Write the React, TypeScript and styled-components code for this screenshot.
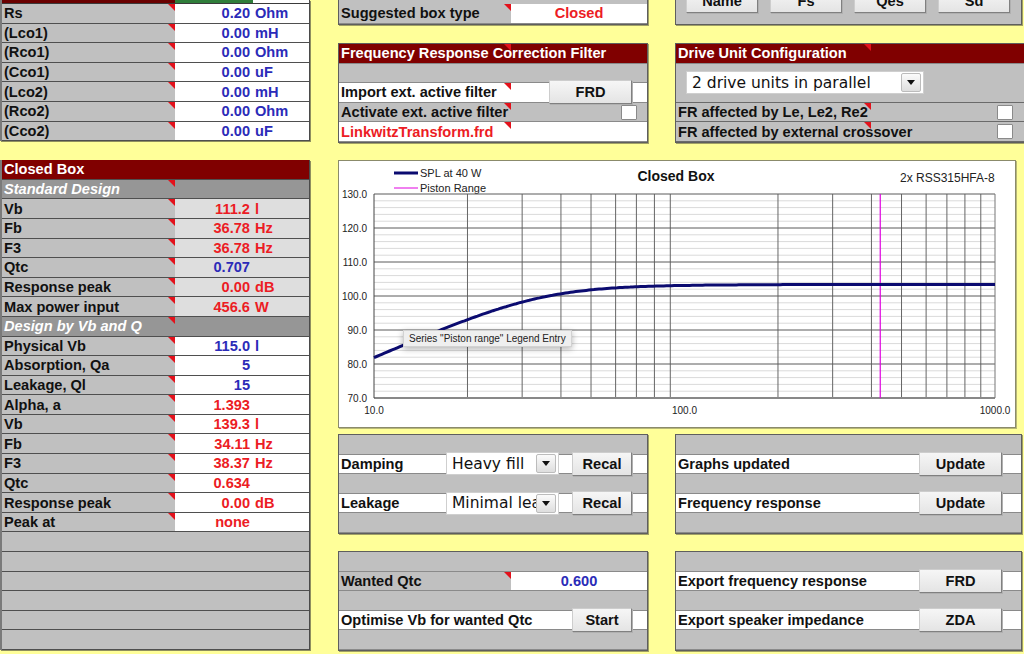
import styled, { createGlobalStyle, css } from 'styled-components';

const GlobalStyle = createGlobalStyle`
  html, body { margin: 0; padding: 0; }
  body {
    background: #ffff99;
    font-family: 'Liberation Sans', Arial, Helvetica, sans-serif;
    overflow: hidden;
  }
`;

const ROW = 19.6;
const TEXT = '14.6px';

const INK = { blue: '#2b2bb8', red: '#ec1c24', black: '#111111', white: '#ffffff' };
type Ink = keyof typeof INK;

const TONE = {
  grey: '#c0c0c0',
  white: '#ffffff',
  light: '#dedede',
  dark: '#800000',
  sub: '#969696',
};
type Tone = keyof typeof TONE;

type Item = { label: string; num?: string; unit?: string; ink?: Ink };

const crossover: Item[] = [
  { label: 'Rs', num: '0.20', unit: 'Ohm' },
  { label: '(Lco1)', num: '0.00', unit: 'mH' },
  { label: '(Rco1)', num: '0.00', unit: 'Ohm' },
  { label: '(Cco1)', num: '0.00', unit: 'uF' },
  { label: '(Lco2)', num: '0.00', unit: 'mH' },
  { label: '(Rco2)', num: '0.00', unit: 'Ohm' },
  { label: '(Cco2)', num: '0.00', unit: 'uF' },
];

const standard: Item[] = [
  { label: 'Vb', num: '111.2', unit: 'l', ink: 'red' },
  { label: 'Fb', num: '36.78', unit: 'Hz', ink: 'red' },
  { label: 'F3', num: '36.78', unit: 'Hz', ink: 'red' },
  { label: 'Qtc', num: '0.707', ink: 'blue' },
  { label: 'Response peak', num: '0.00', unit: 'dB', ink: 'red' },
  { label: 'Max power input', num: '456.6', unit: 'W', ink: 'red' },
];

const byVbQ: Item[] = [
  { label: 'Physical Vb', num: '115.0', unit: 'l', ink: 'blue' },
  { label: 'Absorption, Qa', num: '5', ink: 'blue' },
  { label: 'Leakage, Ql', num: '15', ink: 'blue' },
  { label: 'Alpha, a', num: '1.393', ink: 'red' },
  { label: 'Vb', num: '139.3', unit: 'l', ink: 'red' },
  { label: 'Fb', num: '34.11', unit: 'Hz', ink: 'red' },
  { label: 'F3', num: '38.37', unit: 'Hz', ink: 'red' },
  { label: 'Qtc', num: '0.634', ink: 'red' },
  { label: 'Response peak', num: '0.00', unit: 'dB', ink: 'red' },
  { label: 'Peak at', num: 'none', ink: 'red' },
];

/* ---------- layout ---------- */

const Page = styled.div`
  display: flex;
  gap: 28px;
  width: 1024px;
  height: 654px;
  overflow: hidden;
`;

const LeftColumn = styled.div`
  width: 310px;
  flex: none;
  display: flex;
  flex-direction: column;
  gap: 19px;
`;

const Sheet = styled.div`
  display: flex;
  flex-direction: column;
  box-sizing: border-box;
  background: #c0c0c0;
  border-left: 2px solid #7a7a7a;
  border-right: 1px solid #4a4a4a;
  box-shadow: 1px 1px 0 #8f8f5f;
`;

const Strip = styled.div`
  display: flex;
  height: 4px;
  border-bottom: 1px solid #3a3a3a;
  box-sizing: border-box;
`;

const StripLabel = styled.div`
  width: 173px;
  background: #6a0000;
`;

const StripValue = styled.div`
  flex: 1;
  background: linear-gradient(to right, #2f7d3a 0 78px, #ffffff 78px);
`;

const Main = styled.div`
  width: 686px;
  flex: none;
  display: flex;
  flex-direction: column;
`;

const Band = styled.div<{ $top: number }>`
  display: flex;
  align-items: flex-start;
  gap: 27px;
  flex: none;
  margin-top: ${(p) => p.$top}px;
`;

const Panel = styled.div<{ $w: number; $pad?: number }>`
  width: ${(p) => p.$w}px;
  flex: none;
  box-sizing: border-box;
  display: flex;
  flex-direction: column;
  padding-top: ${(p) => p.$pad ?? 0}px;
  background: #c0c0c0;
  border: 1px solid #5e5e5e;
  box-shadow: 1px 1px 0 #a0a066;
`;

const ButtonBar = styled.div`
  display: flex;
  gap: 12px;
  padding: 8px 0 11px 10px;
`;

const Row = styled.div<{ $tone?: Tone; $rule?: string; $span?: number }>`
  display: flex;
  align-items: stretch;
  flex: none;
  height: ${(p) => ROW * (p.$span ?? 1)}px;
  box-sizing: border-box;
  background: ${(p) => TONE[p.$tone ?? 'grey']};
  border-bottom: 1px solid ${(p) => p.$rule ?? '#4f4f4f'};
`;

const Label = styled.div<{ $w?: number; $tone?: Tone; $ink?: Ink; $mark?: boolean; $italic?: boolean }>`
  position: relative;
  display: flex;
  align-items: center;
  box-sizing: border-box;
  ${(p) => (p.$w ? css`width: ${p.$w}px; flex: none;` : css`flex: 1;`)}
  padding-left: 2px;
  background: ${(p) => (p.$tone ? TONE[p.$tone] : 'transparent')};
  color: ${(p) => INK[p.$ink ?? 'black']};
  font-size: ${TEXT};
  font-weight: bold;
  font-style: ${(p) => (p.$italic ? 'italic' : 'normal')};
  white-space: nowrap;
  ${(p) =>
    p.$mark &&
    css`
      &::after {
        content: '';
        position: absolute;
        top: 0;
        right: 0;
        border-top: 7px solid #e3111b;
        border-left: 7px solid transparent;
      }
    `}
`;

const Value = styled.div<{ $tone?: Tone; $ink?: Ink; $center?: boolean }>`
  flex: 1;
  display: flex;
  align-items: center;
  justify-content: ${(p) => (p.$center ? 'center' : 'flex-start')};
  background: ${(p) => TONE[p.$tone ?? 'white']};
  color: ${(p) => INK[p.$ink ?? 'blue']};
  font-size: ${TEXT};
  font-weight: bold;
  white-space: nowrap;
`;

const Num = styled.span`
  width: 75px;
  text-align: right;
`;

const Unit = styled.span`
  margin-left: 5px;
`;

const Fill = styled.div`
  flex: 1;
`;

const Button = styled.button<{ $w: number; $end?: number }>`
  position: relative;
  align-self: center;
  flex: none;
  width: ${(p) => p.$w}px;
  height: 24px;
  margin: 0 ${(p) => p.$end ?? 0}px 0 0;
  padding: 0;
  box-sizing: border-box;
  border: 1px solid #cdcdcd;
  border-right-color: #808080;
  border-bottom-color: #808080;
  background: linear-gradient(#f6f6f6, #e4e4e4);
  box-shadow: 1px 1px 0 #b0b0b0;
  font: bold ${TEXT} 'Liberation Sans', Arial, sans-serif;
  color: #111;
`;

const Check = styled.span<{ $end: number }>`
  align-self: center;
  flex: none;
  width: 16px;
  height: 15px;
  box-sizing: border-box;
  margin-right: ${(p) => p.$end}px;
  background: #fff;
  border: 1px solid #8a8a8a;
  border-radius: 1px;
`;

const Select = styled.div<{ $w: number; $start?: number }>`
  position: relative;
  align-self: center;
  flex: none;
  display: flex;
  align-items: center;
  width: ${(p) => p.$w}px;
  height: 23px;
  box-sizing: border-box;
  margin-left: ${(p) => p.$start ?? 0}px;
  padding: 0 2px 0 5px;
  background: #fff;
  border: 1px solid #cfcfcf;
  font-family: 'DejaVu Sans', sans-serif;
  font-size: 15.5px;
  color: #111;
`;

const SelectText = styled.span`
  flex: 1;
  overflow: hidden;
  white-space: nowrap;
`;

const SelectArrow = styled.span`
  flex: none;
  display: flex;
  align-items: center;
  justify-content: center;
  width: 20px;
  height: 19px;
  box-sizing: border-box;
  background: linear-gradient(#fbfbfb, #dedede);
  border: 1px solid #bcbcbc;
  border-radius: 2px;
  &::before {
    content: '';
    border-left: 4px solid transparent;
    border-right: 4px solid transparent;
    border-top: 5px solid #111;
  }
`;

const ChartFrame = styled.div`
  position: relative;
  flex: none;
  margin-top: 17px;
  width: 678px;
  height: 268px;
  box-sizing: border-box;
  background: #fff;
  border: 1px solid #8b8b6b;
  box-shadow: 1px 1px 0 #b8b878;
`;

const Plot = styled.svg`
  display: block;
  font-family: 'Liberation Sans', Arial, sans-serif;
`;

const Tip = styled.div`
  position: absolute;
  left: 64px;
  top: 169px;
  padding: 1px 5px;
  line-height: 13px;
  font-size: 10px;
  color: #222;
  white-space: nowrap;
  background: #efefef;
  border: 1px solid #d2d2d2;
  box-shadow: 0 2px 6px rgba(0, 0, 0, 0.3);
`;

/* ---------- chart maths ---------- */

const X0 = 35;
const X1 = 656;
const Y0 = 33;
const Y1 = 237;
const DEC = (X1 - X0) / 2;
const fx = (f: number) => X0 + Math.log10(f / 10) * DEC;
const fy = (db: number) => Y0 + ((130 - db) * (Y1 - Y0)) / 60;

const spl = (f: number) => {
  const x2 = (f / 34.11) ** 2;
  const q = 0.634;
  return 103.4 + 10 * Math.log10((x2 * x2) / ((1 - x2) ** 2 + x2 / (q * q)));
};

const curve = Array.from({ length: 241 }, (_, i) => {
  const f = 10 * 10 ** (i / 120);
  return `${i ? 'L' : 'M'}${fx(f).toFixed(1)},${fy(spl(f)).toFixed(1)}`;
}).join(' ');

const minorDb = Array.from({ length: 29 }, (_, i) => 72 + i * 2).filter((d) => d % 10 !== 0);
const majorDb = [70, 80, 90, 100, 110, 120, 130];
const freqs = [10, 100].flatMap((d) => [2, 3, 4, 5, 6, 7, 8, 9].map((m) => d * m));

const Chart = () => (
  <ChartFrame>
    <Plot width={676} height={266} viewBox="0 0 676 266">
      <text x={337} y={20} fontSize={14} fontWeight="bold" textAnchor="middle" fill="#111">
        Closed Box
      </text>
      <text x={561} y={21} fontSize={12} fill="#222">
        2x RSS315HFA-8
      </text>
      <line x1={55} x2={79} y1={12} y2={12} stroke="#0b0b70" strokeWidth={3} />
      <text x={81} y={16} fontSize={11} fill="#222">
        SPL at 40 W
      </text>
      <line x1={55} x2={79} y1={27} y2={27} stroke="#e000e0" strokeWidth={1} />
      <text x={81} y={31} fontSize={11} fill="#222">
        Piston Range
      </text>

      {minorDb.map((d) => (
        <line key={`m${d}`} x1={X0} x2={X1} y1={fy(d)} y2={fy(d)} stroke="#dadada" strokeWidth={1} />
      ))}
      {freqs.map((f) => (
        <line key={`v${f}`} x1={fx(f)} x2={fx(f)} y1={Y0} y2={Y1} stroke={f === 100 ? '#333' : '#666'} strokeWidth={1} />
      ))}
      {majorDb.map((d) => (
        <line key={`M${d}`} x1={X0} x2={X1} y1={fy(d)} y2={fy(d)} stroke={d === 70 ? '#888' : '#5a5a5a'} strokeWidth={d === 70 ? 2 : 1} />
      ))}
      <line x1={X0} x2={X0} y1={Y0} y2={Y1} stroke="#444" />
      <line x1={X1} x2={X1} y1={Y0} y2={Y1} stroke="#777" />

      <line x1={fx(427)} x2={fx(427)} y1={Y0} y2={Y1} stroke="#e000e0" strokeWidth={1.2} />
      <path d={curve} fill="none" stroke="#0b0b70" strokeWidth={3} />

      {majorDb.map((d) => (
        <text key={`t${d}`} x={28} y={fy(d) + 3.5} fontSize={10} textAnchor="end" fill="#222">
          {d.toFixed(1)}
        </text>
      ))}
      {[10, 100, 1000].map((f) => (
        <text key={`x${f}`} x={fx(f)} y={253} fontSize={10} textAnchor="middle" fill="#222">
          {f.toFixed(1)}
        </text>
      ))}
    </Plot>
    <Tip>Series "Piston range" Legend Entry</Tip>
  </ChartFrame>
);

/* ---------- pieces ---------- */

const DataRow = ({ item, tone = 'white' }: { item: Item; tone?: Tone }) => (
  <Row>
    <Label $w={173} $tone="grey" $mark>
      {item.label}
    </Label>
    <Value $tone={tone} $ink={item.ink}>
      <Num>{item.num}</Num>
      {item.unit && <Unit>{item.unit}</Unit>}
    </Value>
  </Row>
);

const PANEL_RULE = '#8a8a8a';

const ActionRow = ({ label, action, end }: { label: string; action: string; end: number }) => (
  <Row $tone="white" $rule={PANEL_RULE}>
    <Label>{label}</Label>
    <Button $w={end === 15 ? 60 : 83} $end={end}>
      {action}
    </Button>
  </Row>
);

const Gap = () => <Row $rule={PANEL_RULE} />;

const App = () => {
  return (
    <>
      <GlobalStyle />
      <Page>
        <LeftColumn>
          <Sheet>
            <Strip>
              <StripLabel />
              <StripValue />
            </Strip>
            {crossover.map((item) => (
              <DataRow key={item.label} item={item} />
            ))}
          </Sheet>
          <Sheet>
            <Row $tone="dark">
              <Label $ink="white">Closed Box</Label>
            </Row>
            <Row $tone="sub">
              <Label $w={173} $ink="white" $italic $mark>
                Standard Design
              </Label>
            </Row>
            {standard.map((item) => (
              <DataRow key={`s${item.label}`} item={item} tone="light" />
            ))}
            <Row $tone="sub">
              <Label $w={173} $ink="white" $italic $mark>
                Design by Vb and Q
              </Label>
            </Row>
            {byVbQ.map((item, i) => (
              <DataRow key={`q${i}`} item={item} />
            ))}
            {[0, 1, 2, 3, 4, 5].map((i) => (
              <Row key={`e${i}`} />
            ))}
          </Sheet>
        </LeftColumn>

        <Main>
          <Band $top={-20}>
            <Panel $w={310} $pad={23}>
              <Row $rule={PANEL_RULE}>
                <Label $w={172} $mark>
                  Suggested box type
                </Label>
                <Value $ink="red" $center>
                  Closed
                </Value>
              </Row>
            </Panel>
            <Panel $w={347}>
              <ButtonBar>
                <Button $w={72}>Name</Button>
                <Button $w={72}>Fs</Button>
                <Button $w={72}>Qes</Button>
                <Button $w={72}>Sd</Button>
              </ButtonBar>
            </Panel>
          </Band>

          <Band $top={18}>
            <Panel $w={310}>
              <Row $tone="dark" $rule={PANEL_RULE}>
                <Label $w={172} $ink="white" $mark>
                  Frequency Response Correction Filter
                </Label>
              </Row>
              <Gap />
              <Row $tone="white" $rule={PANEL_RULE}>
                <Label $w={172} $mark>
                  Import ext. active filter
                </Label>
                <Fill />
                <Button $w={83} $end={15}>
                  FRD
                </Button>
              </Row>
              <Row $rule={PANEL_RULE}>
                <Label $w={172} $mark>
                  Activate ext. active filter
                </Label>
                <Fill />
                <Check $end={10} />
              </Row>
              <Row $tone="white" $rule={PANEL_RULE}>
                <Label $w={172} $ink="red" $mark>
                  LinkwitzTransform.frd
                </Label>
              </Row>
            </Panel>
            <Panel $w={352}>
              <Row $tone="dark" $rule={PANEL_RULE}>
                <Label $w={195} $ink="white" $mark>
                  Drive Unit Configuration
                </Label>
              </Row>
              <Row $span={2} $rule="#6a6a6a">
                <Select $w={238} $start={10}>
                  <SelectText>2 drive units in parallel</SelectText>
                  <SelectArrow />
                </Select>
              </Row>
              <Row $rule="#6a6a6a">
                <Label $w={195} $mark>
                  FR affected by Le, Le2, Re2
                </Label>
                <Fill />
                <Check $end={13} />
              </Row>
              <Row $rule="#6a6a6a">
                <Label $w={195} $mark>
                  FR affected by external crossover
                </Label>
                <Fill />
                <Check $end={13} />
              </Row>
            </Panel>
          </Band>

          <Chart />

          <Band $top={6}>
            <Panel $w={310}>
              <Gap />
              <Row $tone="white" $rule={PANEL_RULE}>
                <Label $w={107}>Damping</Label>
                <Select $w={113}>
                  <SelectText>Heavy fill</SelectText>
                  <SelectArrow />
                </Select>
                <Fill />
                <Button $w={60} $end={15}>
                  Recal
                </Button>
              </Row>
              <Gap />
              <Row $tone="white" $rule={PANEL_RULE}>
                <Label $w={107}>Leakage</Label>
                <Select $w={113}>
                  <SelectText>Minimal leakage</SelectText>
                  <SelectArrow />
                </Select>
                <Fill />
                <Button $w={60} $end={15}>
                  Recal
                </Button>
              </Row>
              <Gap />
            </Panel>
            <Panel $w={347}>
              <Gap />
              <ActionRow label="Graphs updated" action="Update" end={19} />
              <Gap />
              <ActionRow label="Frequency response" action="Update" end={19} />
              <Gap />
            </Panel>
          </Band>

          <Band $top={17}>
            <Panel $w={310}>
              <Gap />
              <Row $rule={PANEL_RULE}>
                <Label $w={172} $mark>
                  Wanted Qtc
                </Label>
                <Value $ink="blue" $center>
                  0.600
                </Value>
              </Row>
              <Gap />
              <ActionRow label="Optimise Vb for wanted Qtc" action="Start" end={15} />
              <Gap />
            </Panel>
            <Panel $w={347}>
              <Gap />
              <ActionRow label="Export frequency response" action="FRD" end={19} />
              <Gap />
              <ActionRow label="Export speaker impedance" action="ZDA" end={19} />
              <Gap />
            </Panel>
          </Band>
        </Main>
      </Page>
    </>
  );
};

export default App;
